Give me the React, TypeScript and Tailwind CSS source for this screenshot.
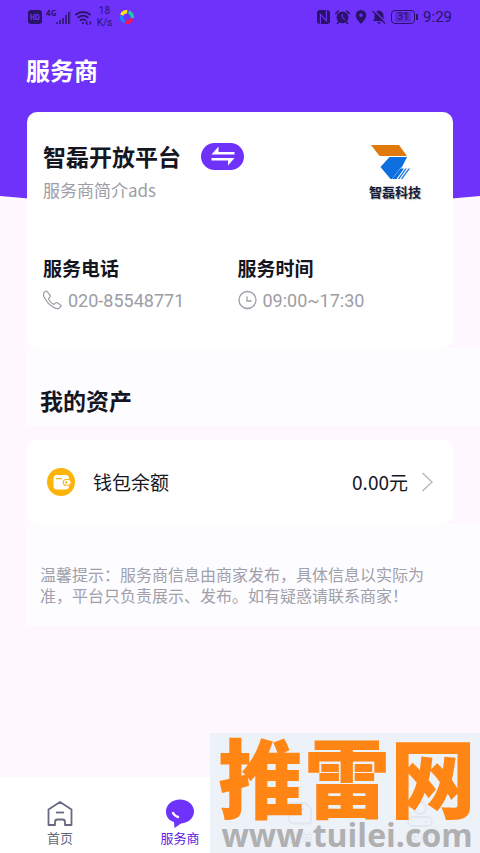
import React from 'react';

const StatusBar: React.FC = () => (
  <div className="flex items-center justify-between pl-7 pr-7 h-[34px] text-[#2b1368]">
    <div className="flex items-center gap-1">
      <svg className="w-[14px] h-[14px]" viewBox="0 0 14 14" aria-hidden="true">
        <rect width="14" height="14" rx="3" fill="currentColor" />
        <path d="M3 4v6M6 4v6M3 7h3M8 4.5v5h1a2 2 0 0 0 2-2v-1a2 2 0 0 0-2-2z" fill="none" stroke="#6e32fa" strokeWidth="1.2" />
      </svg>
      <div className="flex items-center">
        <span className="text-[8px] leading-[8px] font-bold pb-2">4G</span>
        <svg className="w-[15px] h-[14px]" viewBox="0 0 15 14" aria-hidden="true">
          <path d="M1 14v-2M4 14v-4M7 14V8M10 14V5M12.800 14V2" stroke="currentColor" strokeWidth="1.5" />
          <path d="M14.500 14V0" stroke="currentColor" strokeOpacity="0.25" />
        </svg>
      </div>
      <svg className="w-[17px] h-[15px]" viewBox="0 0 17 15" fill="none" stroke="currentColor" strokeWidth="1.8" strokeLinecap="round" aria-hidden="true">
        <path d="M1 4.5a11 11 0 0 1 14 0M3.2 7.5a7.5 7.5 0 0 1 9.6 0M5.6 10.2a4 4 0 0 1 4.8 0" />
        <circle cx="8" cy="13" r="1" fill="currentColor" stroke="none" />
        <path d="M12.4 11.6 11 13l1.4 1.4M14.6 11.6 16 13l-1.4 1.4" strokeWidth="1.1" />
      </svg>
      <div className="flex flex-col items-center w-4 text-[10px] leading-[12px] font-[Roboto]">
        <span>18</span>
        <span>K/s</span>
      </div>
      <svg className="w-[14px] h-[14px] ml-1" viewBox="0 0 14 14" fill="none" strokeWidth="3.4" aria-hidden="true">
        <path d="M1.7 5.2A5.4 5.4 0 0 1 7.2 1.8" stroke="#ffe21a" />
        <path d="M8.6 2a5.2 5.2 0 0 1 3.600 6" stroke="#18cfa0" />
        <path d="M11.800 9a5.200 5.200 0 0 1-6 3.200" stroke="#fb1650" />
        <path d="M4.600 11.700A5.200 5.200 0 0 1 1.800 6" stroke="#1688ff" />
      </svg>
    </div>

    <div className="flex items-center gap-[5px]">
      <svg className="w-[13px] h-[14px]" viewBox="0 0 13 14" aria-hidden="true">
        <rect width="13" height="14" rx="3" fill="currentColor" />
        <path d="M3.4 14V4.400l6 6.400V0" fill="none" stroke="#6e32fa" strokeWidth="1.100" />
      </svg>
      <svg className="w-[15px] h-[14px]" viewBox="0 0 15 14" aria-hidden="true">
        <circle cx="7.5" cy="7.3" r="5.9" fill="currentColor" />
        <path d="M.8 3.4 3.4 1M14.2 3.4 11.6 1M3.6 12l-1.2 1.600M11.400 12l1.200 1.600" stroke="currentColor" strokeWidth="1.5" strokeLinecap="round" />
        <path d="M7.3 4v3.600l2.600 2" fill="none" stroke="#6e32fa" strokeWidth="1.100" />
      </svg>
      <svg className="w-[12px] h-[14px]" viewBox="0 0 12 14" aria-hidden="true">
        <path fill="currentColor" fillRule="evenodd" d="M6 0a5.300 5.300 0 0 1 5.300 5.300C11.300 9 6 14 6 14S.7 9 .7 5.300A5.300 5.300 0 0 1 6 0zm0 3.600a1.700 1.700 0 1 0 0 3.400 1.700 1.700 0 0 0 0-3.400z" />
      </svg>
      <svg className="w-[14px] h-[14px]" viewBox="0 0 14 14" aria-hidden="true">
        <path fill="currentColor" d="M7 0l1.200 1.300C10.500 1.800 11.500 3.500 11.500 6v2.500L13 11H1l1.500-2V6C2.500 3.500 3.600 1.800 5.800 1.300zM5.300 12h3.400a1.700 1.700 0 0 1-3.400 0z" />
        <path d="M1.500 0 14 12.500" stroke="#6e32fa" strokeWidth="1.300" />
        <path d="M.5 1 13 13.500" stroke="currentColor" strokeWidth="1.300" />
      </svg>
      <div className="flex items-center">
        <div className="flex items-center justify-center w-6 h-[14px] rounded border border-current text-[11px] leading-[10px] font-[Roboto]">
          <span className="bg-[#2b1368]/25 px-[2px]">31</span>
        </div>
        <div className="w-[2px] h-[6px] ml-px bg-current"></div>
      </div>
      <span className="text-[15px] leading-[18px] font-[Roboto]">9:29</span>
    </div>
  </div>
);

const PhoneIcon: React.FC = () => (
  <svg className="w-5 h-5" viewBox="0 0 20 20" fill="none" stroke="currentColor" strokeWidth="1.2" strokeLinejoin="round" aria-hidden="true">
    <path d="M2.300 1.400 .9 3c-.8.9-.4 3 .8 5.300a22 22 0 0 0 8.200 8.600c2.600 1.500 4.900 2.200 6 1.500l1.700-1.600c.6-.6.500-1.300-.1-1.800l-3.200-2.200c-.6-.4-1.200-.3-1.700.1l-1.200 1.100c-.5.400-1 .2-1.500-.1-1.700-1.200-3-2.600-4-4.200-.3-.5-.4-1 0-1.500l1.100-1.300c.4-.5.400-1 .1-1.600L4.200 1.600c-.5-.7-1.300-.8-1.900-.2z" />
  </svg>
);

const ClockIcon: React.FC = () => (
  <svg className="w-5 h-5" viewBox="0 0 20 20" fill="none" stroke="currentColor" strokeWidth="1.300" aria-hidden="true">
    <circle cx="9.500" cy="10" r="8.500" />
    <path d="M9 6.500v4.500h4.500" />
  </svg>
);

const CompanyLogo: React.FC = () => (
  <div className="flex flex-col w-[52px]">
    <svg className="w-10 h-9 ml-[2px]" viewBox="0 0 40 36" role="img" aria-label="logo">
      <path d="M0 1h28l8 11H8.500z" fill="#e07a0c" />
      <path d="M18.500 13H36L25 35H19.500L9.500 23z" fill="#0d6fe0" />
      <path d="M30 23.500h10.500L31 36H20z" fill="#fff" />
      <path d="M29.500 24.500h3.500L25.500 35H21zM34.300 24.500h1.500L28.300 35h-1.500zM37.500 24.500H39L31.300 35h-1.500z" fill="#0d6fe0" />
    </svg>
    <span className="mt-[3px] text-[13px] leading-[18px] font-bold text-[#14203a] whitespace-nowrap [text-shadow:1px_1px_1px_#bbb]">智磊科技</span>
  </div>
);

const contacts = [
  { label: '服务电话', value: '020-85548771', icon: PhoneIcon },
  { label: '服务时间', value: '09:00~17:30', icon: ClockIcon }
];

const HomeIcon = () => (
  <svg className="w-[30px] h-[30px]" viewBox="0 0 30 30" fill="none" stroke="currentColor" strokeWidth="1.800" strokeLinejoin="round" aria-hidden="true">
    <path d="M3.500 10.500 15 3l11.500 7.500v15.500h-6.500v-3a2.500 2.500 0 0 0-2.500-2.500h-5a2.500 2.500 0 0 0-2.500 2.500v3h-6.500z" />
    <path d="M11 13.500h8" />
  </svg>
);

const ServiceIcon = () => (
  <svg className="w-[30px] h-[30px]" viewBox="0 0 30 30" aria-hidden="true">
    <path d="M15 .5C7 .5 1 5.500 1 12.500c0 5.500 3 9 8 10.500L9.500 29l6.500-4.500C23.500 24 29 19 29 12.500 29 5.500 23 .5 15 .5z" fill="#6e32fa" />
    <path d="M8 14c1 2 3 3.500 5 4" stroke="#fff" strokeWidth="2.400" strokeLinecap="round" fill="none" />
  </svg>
);

const OrderIcon = () => (
  <svg className="w-[30px] h-[30px]" viewBox="0 0 30 30" fill="none" stroke="currentColor" strokeWidth="1.800" aria-hidden="true">
    <path d="M3.500 4H20l6 6v12a2.500 2.500 0 0 1-2.500 2.500H9A5.500 5.500 0 0 1 3.500 19zM8 10h11M8 15h7" />
  </svg>
);

const MineIcon = () => (
  <svg className="w-[30px] h-[30px]" viewBox="0 0 30 30" fill="none" stroke="currentColor" strokeWidth="1.800" aria-hidden="true">
    <path d="M9 3h6a6 6 0 1 1-6 6z" />
    <rect x="3" y="18" width="24" height="9" rx="4.500" />
    <path d="M20 22.500h3" />
  </svg>
);

const tabs = [
  { label: '首页', icon: HomeIcon, active: false },
  { label: '服务商', icon: ServiceIcon, active: true },
  { label: '订单', icon: OrderIcon, active: false },
  { label: '我的', icon: MineIcon, active: false }
];

const App: React.FC = () => {
  return (
    <div className="relative flex flex-col min-h-screen overflow-hidden bg-[#fef8fe] font-['Noto_Sans_CJK_SC',sans-serif] text-[#15161f]">
      {/* Header */}
      <header className="bg-[#6e32fa]">
        <StatusBar />
        <h1 className="px-[26px] pt-[18px] pb-[108px] text-2xl leading-9 font-bold text-white">服务商</h1>
      </header>
      <svg className="block w-full h-3" viewBox="0 0 480 12" preserveAspectRatio="none" aria-hidden="true">
        <path d="M0 0h480Q240 24 0 0z" fill="#6e32fa" />
      </svg>

      <main className="relative flex-1 -mt-24">
        {/* Provider card */}
        <section className="mx-[27px] px-4 pt-6 pb-8 bg-white rounded-[10px]">
          <div className="flex justify-between h-24">
            <div>
              <div className="flex items-center gap-5">
                <h2 className="text-[23px] leading-10 font-bold">智磊开放平台</h2>
                <button aria-label="切换" className="flex items-center justify-center w-[43px] h-[27px] rounded-full bg-[#6e32fa]">
                  <svg className="w-6 h-5" viewBox="0 0 24 20" fill="#fff" aria-hidden="true">
                    <path d="M.5 8.500 7.500.5v5.500H23.500v2.500zM23.500 12l-6.500 7.500V14.500H.5V12z" />
                  </svg>
                </button>
              </div>
              <p className="mt-[2px] text-[17px] leading-6 text-[#9c9da5]">服务商简介ads</p>
            </div>
            <div className="pt-2 pr-4">
              <CompanyLogo />
            </div>
          </div>
          <dl className="grid grid-cols-2 pt-5 pr-[5px]">
            {contacts.map((item) => (
              <div key={item.label}>
                <dt className="text-[19px] leading-8 font-bold">{item.label}</dt>
                <dd className="flex items-center gap-[5px] h-8 text-[18px] font-[Roboto] text-[#9c9da5]">
                  <item.icon />
                  {item.value}
                </dd>
              </div>
            ))}
          </dl>
        </section>

        {/* Assets */}
        <section className="ml-[27px] pl-[13px] pt-[34px] pb-2 bg-[#fdfcff]">
          <h2 className="text-[23px] leading-9 font-bold">我的资产</h2>
        </section>
        <button className="flex items-center w-[calc(100%-54px)] mx-[27px] mt-[14px] h-[84px] pl-5 pr-5 bg-white rounded-[10px] text-[19px]">
          <svg className="w-7 h-7" viewBox="0 0 28 28" aria-hidden="true">
            <circle cx="14" cy="14" r="14" fill="#fcb40b" />
            <rect x="6.500" y="7" width="15.500" height="14.500" rx="3.500" fill="#fff" />
            <path d="M9.500 10.700h5" stroke="#fcb40b" strokeWidth="1.200" strokeLinecap="round" />
            <rect x="16.200" y="11.500" width="8" height="5.800" rx="2.900" fill="#fff" stroke="#fcb40b" strokeWidth="1.100" />
            <circle cx="19.200" cy="14.400" r="1.200" fill="#fcb40b" />
          </svg>
          <span className="ml-[18px]">钱包余额</span>
          <span className="ml-auto">0.00元</span>
          <svg className="w-3 h-5 ml-[13px]" viewBox="0 0 12 20" fill="none" stroke="#b9b9be" strokeWidth="1.500" aria-hidden="true">
            <path d="M1.500 1 11 10l-9.500 9" />
          </svg>
        </button>
        <p className="ml-[27px] pl-[13px] pr-12 pt-10 pb-5 bg-[#fdfcff] text-base leading-[21px] text-[#9fa0a9]">
          温馨提示：服务商信息由商家发布，具体信息以实际为准，平台只负责展示、发布。如有疑惑请联系商家！
        </p>
      </main>

      {/* Tab bar */}
      <nav className="flex h-[76px] bg-white">
        {tabs.map((tab) => (
          <button
            key={tab.label}
            className={`flex flex-col items-center flex-1 pt-[22px] text-[13px] leading-[18px] ${tab.active ? 'text-[#5c22e0]' : 'text-[#666a80]'}`}
          >
            <tab.icon />
            <span>{tab.label}</span>
          </button>
        ))}
      </nav>

      {/* Watermark */}
      <div className="absolute right-0 bottom-0 w-[270px] h-[120px] flex flex-col items-center pl-1 bg-[#ecf1f9]/92 whitespace-nowrap">
        <span className="text-[86px] leading-[84px] font-black text-[#ff8614]">推雷网</span>
        <span className="text-[32px] leading-9 font-bold font-['Open_Sans'] text-[#b0b0b0]">www.tuilei.com</span>
      </div>
    </div>
  );
};

export default App;
